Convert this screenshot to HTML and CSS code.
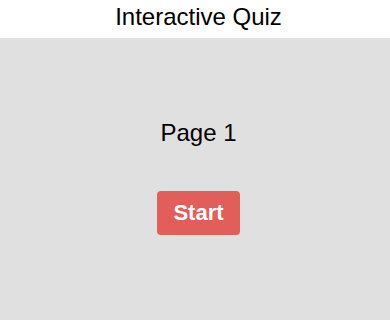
FILE: index.html
```html
<!DOCTYPE html>
<html>
<head>
<meta charset="utf-8">
<link rel="stylesheet" href="styles.css">
</head>
<body>
<header class="top">Interactive Quiz</header>
<main class="stage">
  <div class="page-label">Page 1</div>
  <button class="start-btn">Start</button>
</main>
</body>
</html>
```
FILE: styles.css
```css
html, body {
  margin: 0;
  padding: 0;
  height: 100%;
}
body {
  font-family: "Liberation Sans", Arial, Helvetica, sans-serif;
  font-size: 24px;
  color: #000;
  background: #e0e0e0;
  display: flex;
  flex-direction: column;
}
.top {
  background: #fff;
  text-align: center;
  line-height: 28px;
  padding: 3px 0 7px 7px;
}
.stage {
  flex: 1;
  background: #e0e0e0;
  display: flex;
  flex-direction: column;
  align-items: center;
  padding: 81px 0 0 7px;
}
.page-label {
  line-height: 28px;
}
.start-btn {
  margin-top: 44px;
  font-family: inherit;
  font-size: 22px;
  font-weight: bold;
  line-height: 26px;
  padding: 9px 16px;
  border: none;
  border-radius: 4px;
  background: #e15e5a;
  color: #fff;
}
```
